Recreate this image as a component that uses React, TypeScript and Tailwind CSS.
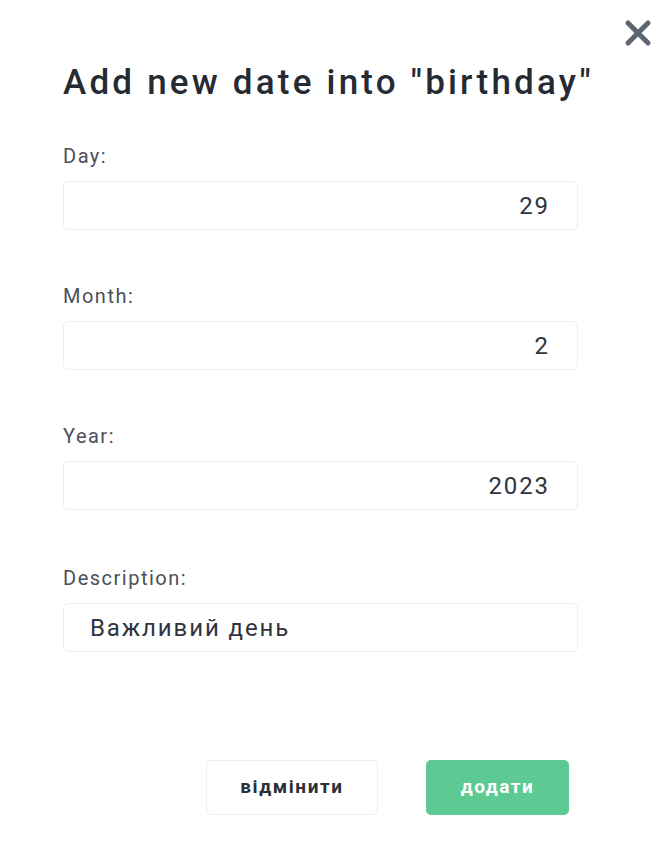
import React from 'react';

const Field: React.FC<{ label: string; value: string; left?: boolean }> = ({ label, value, left }) => (
    <div className="flex flex-col">
        <label className="text-[20px] text-[#4b4f58] tracking-[1.5px] leading-[24px]">{label}</label>
        <div
            className={`mt-[13px] h-[49px] w-[515px] rounded-[5px] border border-[#eceef2] bg-white flex items-center text-[24px] text-[#2f3440] tracking-[1.9px] ${
                left ? 'justify-start pl-[26px]' : 'justify-end pr-[27px]'
            }`}
        >
            {value}
        </div>
    </div>
);

export default function App() {
    return (
        <div className="relative w-[669px] h-[861px] bg-white font-['Roboto',sans-serif]">
            <button className="absolute right-[16px] top-[18px] w-[30px] h-[30px] flex items-center justify-center">
                <svg viewBox="0 0 24 24" width="30" height="30" fill="none" stroke="#5d6572" strokeWidth="4" strokeLinecap="round">
                    <path d="M4 4 L20 20 M20 4 L4 20" />
                </svg>
            </button>

            <div className="pl-[63px] pt-[59px]">
                <h2 className="text-[35px] font-medium text-[#262a33] tracking-[3.2px] leading-[48px]">
                    Add new date into "birthday"
                </h2>

                <div className="mt-[37px] flex flex-col gap-[54px]">
                    <Field label="Day:" value="29" />
                    <Field label="Month:" value="2" />
                    <Field label="Year:" value="2023" />
                    <div className="mt-[2px]">
                        <Field label="Description:" value="Важливий день" left />
                    </div>
                </div>

                <div className="mt-[108px] flex gap-[48px] pl-[143px]">
                    <button className="w-[172px] h-[55px] rounded-[5px] border border-[#eceef2] bg-white text-[19px] font-bold text-[#2b2f3a] tracking-[1.6px]">
                        відмінити
                    </button>
                    <button className="w-[143px] h-[55px] rounded-[5px] bg-[#5cca92] text-[19px] font-bold text-white tracking-[1.5px]">
                        додати
                    </button>
                </div>
            </div>
        </div>
    );
}
